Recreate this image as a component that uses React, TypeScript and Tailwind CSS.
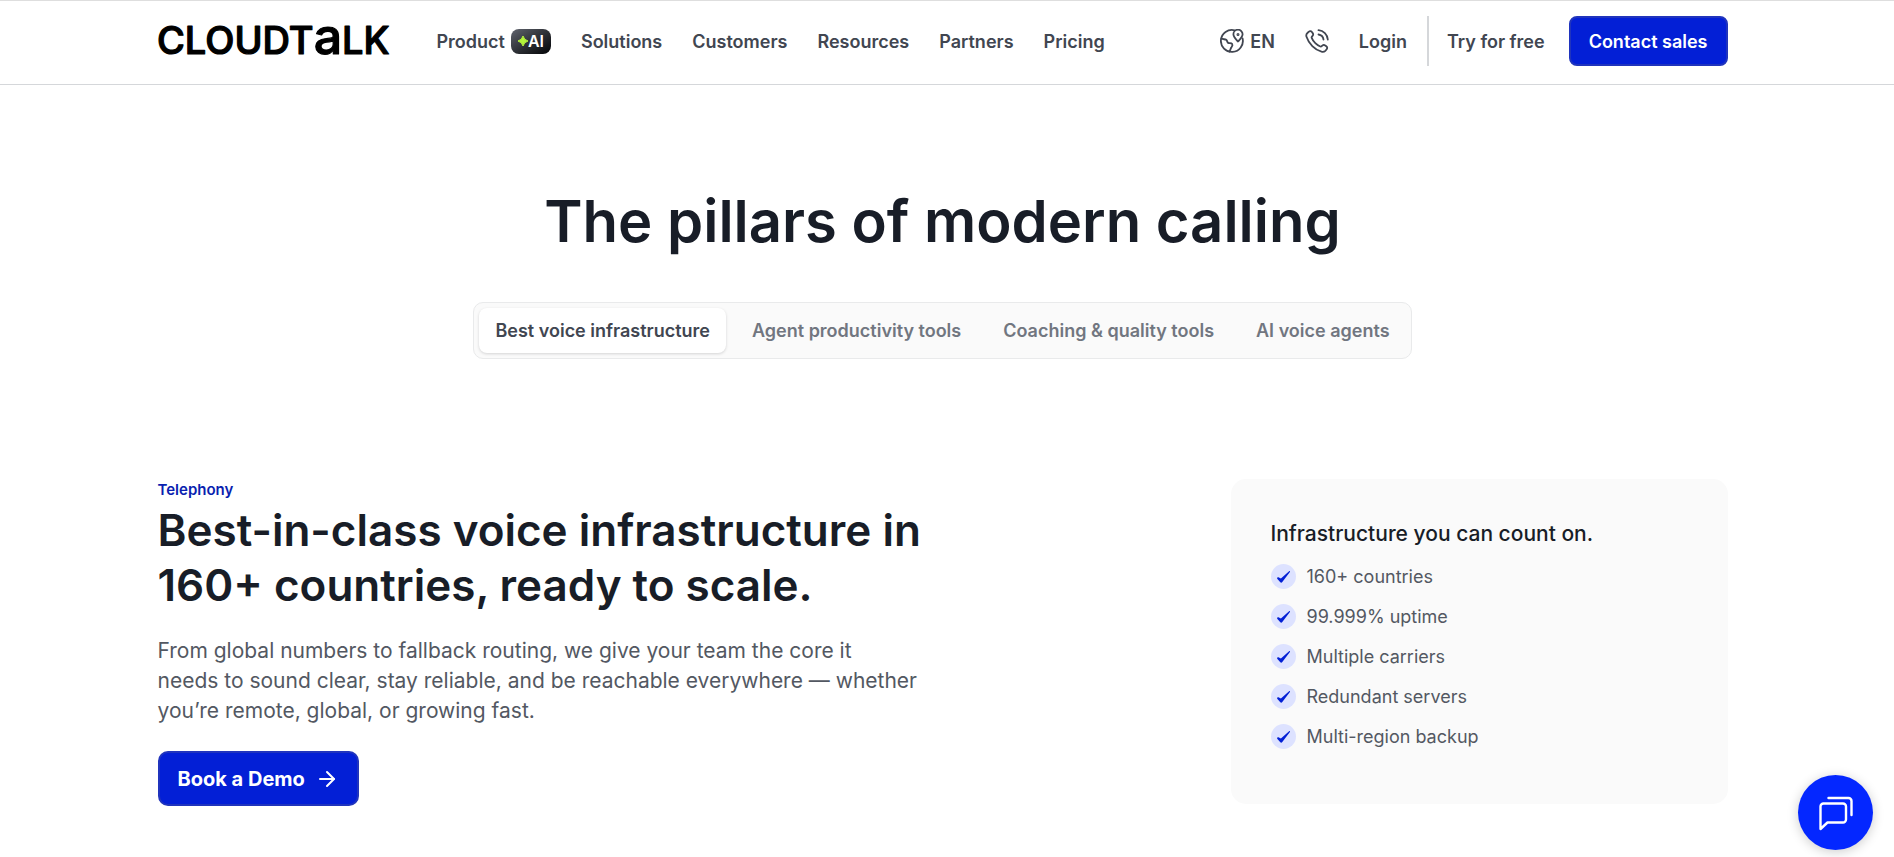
import { ArrowRight } from "lucide-react";

const navLinks = ["Solutions", "Customers", "Resources", "Partners", "Pricing"];

const tabs = [
  "Best voice infrastructure",
  "Agent productivity tools",
  "Coaching & quality tools",
  "AI voice agents",
];

const features = [
  "160+ countries",
  "99.999% uptime",
  "Multiple carriers",
  "Redundant servers",
  "Multi-region backup",
];

const Logo = () => (
  <a href="#" aria-label="CloudTalk" className="block shrink-0">
    <svg width="234" height="30" viewBox="0 0 234 30" className="block overflow-visible font-['Inter']">
      <text
        x="-1"
        y="28"
        fontSize="38"
        fontWeight="500"
        fill="#000"
        stroke="#000"
        strokeWidth="1.2"
        strokeLinejoin="round"
      >
        CLOUDT<tspan fontSize="50">a</tspan>LK
      </text>
    </svg>
  </a>
);

const GlobeIcon = () => (
  <svg width="24" height="24" viewBox="0 0 24 24" fill="none" stroke="currentColor" strokeWidth="1.8" strokeLinecap="round" strokeLinejoin="round">
    <path d="M14.6 1.3A11 11 0 1 0 22.6 9.500" />
    <path d="M1.4 9.500c1.600 1 3.600.5 4.800 1.300 1.200.9.800 2.300 2 3.100 1.200.7 3-.2 4 1.200.9 1.300-.2 2.400-1 3.500-.7 1-.6 2.500-1.800 4" />
    <path d="M18 12.500c-2.200-2.500-4.600-4.600-4.600-7.200a4.600 4.600 0 0 1 9.200 0c0 2.600-2.400 4.700-4.600 7.200Z" />
    <circle cx="18" cy="5.400" r="0.600" />
  </svg>
);

const PhoneIcon = () => (
  <svg width="24" height="24" viewBox="0 0 24 24" fill="none" stroke="currentColor" strokeWidth="1.8" strokeLinecap="round" strokeLinejoin="round">
    <path d="M6.700 8.900c.8 2 2 3.800 3.600 5.300 1.500 1.500 3.200 2.600 5 3.300.6.200 1 .1 1.400-.3l.6-.6c.9-.8 1.900-.9 2.900-.2l1.100.8c1.200.9 1.200 2.200.2 3.300l-1.200 1.300c-1 1-2.300 1.300-3.800.9-3.400-1-6.500-2.900-9.200-5.600C4.600 14.400 2.600 11.200 1.500 7.800c-.5-1.500-.2-2.800.9-3.800l1.200-1.200c1.100-1 2.400-1 3.300.2l.8 1.100c.7 1 .6 2-.2 2.900l-.6.6c-.4.4-.4.800-.2 1.300Z" />
    <path d="M13.500 1.200A10 10 0 0 1 22.800 10.500" />
    <path d="M13.500 5.500A6 6 0 0 1 18.500 10.500" />
  </svg>
);

const ChatIcon = () => (
  <svg width="36" height="36" viewBox="0 0 36 36" fill="none" stroke="currentColor" strokeWidth="2.400" strokeLinecap="round" strokeLinejoin="round">
    <path d="M5 8.500h20a3 3 0 0 1 3 3v13a3 3 0 0 1-3 3H9.500L2.500 34V11.500a3 3 0 0 1 3-3Z" />
    <path d="M10.500 3h20a3 3 0 0 1 3 3v14" />
  </svg>
);

const Check = () => (
  <span className="flex size-[25px] shrink-0 items-center justify-center rounded-full bg-[#dde2ff] text-[#0320d6]">
    <svg width="13" height="12" viewBox="0 0 13 12" fill="currentColor">
      <path d="M12.100.2c.6-.4 1.200.2.800.8L5.300 11.100c-.5.700-1.400.8-2 .2L.4 8.100C-.3 7.200.4 6 1.500 6.300l2.400 1.200Z" />
    </svg>
  </span>
);

const Header = () => (
  <header className="border-y border-t-[#dedede] border-b-[#d5d7da] pr-[9px]">
    <div className="mx-auto flex max-w-[1570px] items-center justify-between pt-[15px] pb-[18px] text-[18px] font-semibold text-[#414651]">
      <div className="flex items-center">
        <Logo />
        <nav className="ml-[45px] flex items-center gap-[30px]">
          <a href="#" className="flex items-center gap-[6px]">
            Product
            <span className="flex h-[25px] w-10 items-center justify-center rounded-lg bg-linear-to-br from-[#61656f] to-[#050608] text-base text-white">
              <svg width="10" height="10" viewBox="0 0 10 10" fill="#b4f53c">
                <path d="M5 0Q6 4 10 5Q6 6 5 10Q4 6 0 5Q4 4 5 0Z" stroke="#b4f53c" />
              </svg>
              AI
            </span>
          </a>
          {navLinks.map((link) => (
            <a key={link} href="#">{link}</a>
          ))}
        </nav>
      </div>
      <div className="flex items-center">
        <button type="button" className="flex items-center gap-[6px]">
          <GlobeIcon />
          EN
        </button>
        <a href="#" aria-label="Call us" className="ml-[30px]"><PhoneIcon /></a>
        <a href="#" className="ml-[30px]">Login</a>
        <a href="#" className="ml-5 flex h-[50px] items-center border-l-2 border-[#d5d7da] pl-[18px]">Try for free</a>
        <a href="#" className="ml-6 flex h-[50px] items-center rounded-lg border-2 border-[#2034bd] bg-[#031fd6] px-[18px] text-white">Contact sales</a>
      </div>
    </div>
  </header>
);

export default function App() {
  return (
    <div className="min-h-screen bg-white font-['Inter',sans-serif]">
      <Header />

      <main className="pr-[9px]">
        <div className="mx-auto max-w-[1570px]">
          <h1 className="pt-[100px] text-center text-[58px] leading-[72px] font-semibold text-[#181d27]">
            The pillars of modern calling
          </h1>

          <div role="tablist" className="mx-auto mt-[45px] flex w-fit gap-[10px] rounded-[10px] border border-[#e9eaeb] bg-[#fafafa] p-[5px]">
            {tabs.map((tab, i) => (
              <button
                key={tab}
                type="button"
                role="tab"
                aria-selected={i === 0}
                className={
                  i === 0
                    ? "h-[45px] rounded-lg bg-white px-4 text-[18px] font-semibold text-[#414651] shadow-[0_1px_3px_rgba(10,13,18,0.16)]"
                    : "h-[45px] rounded-lg px-4 text-[18px] font-semibold text-[#717680]"
                }
              >
                {tab}
              </button>
            ))}
          </div>

          <section className="mt-[120px] flex items-start justify-between">
            <div className="max-w-[780px]">
              <p className="text-[15px] leading-[22px] font-semibold text-[#0a1fb0]">Telephony</p>
              <h2 className="mt-[2px] text-[44px] leading-[55px] font-semibold text-[#181d27]">
                Best-in-class voice infrastructure in 160+ countries, ready to scale.
              </h2>
              <p className="mt-[23px] text-[21px] leading-[30px] text-[#535862]">
                From global numbers to fallback routing, we give your team the core it{" "}
                <br className="hidden lg:block" />
                needs to sound clear, stay reliable, and be reachable everywhere — whether you’re remote, global, or growing fast.
              </p>
              <a href="#" className="mt-[25px] flex h-[55px] w-fit items-center gap-[10px] rounded-[10px] border-2 border-[#2034bd] bg-[#031fd6] px-[18px] text-[20px] font-bold text-white">
                Book a Demo
                <ArrowRight size={24} />
              </a>
            </div>

            <aside className="w-[497px] shrink-0 rounded-[15px] bg-[#fafafa] px-10 pt-10 pb-[55px]">
              <h3 className="text-[21px] leading-[30px] font-medium text-[#181d27]">Infrastructure you can count on.</h3>
              <ul className="mt-[15px] flex flex-col gap-[15px]">
                {features.map((feature) => (
                  <li key={feature} className="flex items-center gap-[11px] text-[18px] leading-[25px] text-[#535862]">
                    <Check />
                    {feature}
                  </li>
                ))}
              </ul>
            </aside>
          </section>
        </div>
      </main>

      <button
        type="button"
        aria-label="Open chat"
        className="fixed right-[21px] bottom-[7px] flex size-[75px] items-center justify-center rounded-full bg-[#0427ff] text-white shadow-[0_2px_12px_rgba(0,0,0,0.2)]"
      >
        <ChatIcon />
      </button>
    </div>
  );
}
